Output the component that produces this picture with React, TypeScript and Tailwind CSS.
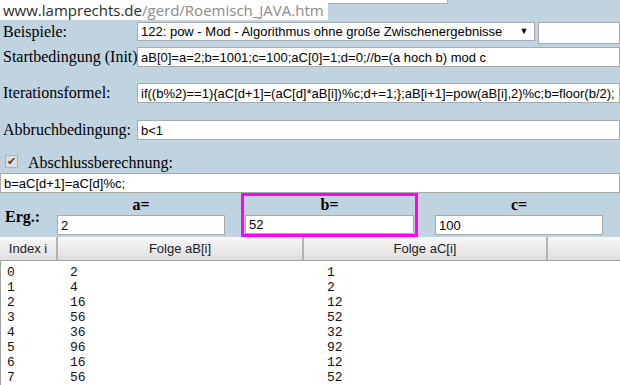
const rows: [string, string, string][] = [
  ['0', '2', '1'],
  ['1', '4', '2'],
  ['2', '16', '12'],
  ['3', '56', '52'],
  ['4', '36', '32'],
  ['5', '96', '92'],
  ['6', '16', '12'],
  ['7', '56', '52'],
];

const inputCls =
  "bg-white border border-[#a9a9a9] font-['Liberation_Sans',Arial,sans-serif] text-[13px] text-black leading-none flex items-center px-[3px] whitespace-nowrap overflow-hidden";

function Label({ children }: { children: React.ReactNode }) {
  return <div className="w-[137px] shrink-0 pl-[3px] text-[16px] text-black leading-none whitespace-nowrap">{children}</div>;
}

function ResultCol({ name, value }: { name: string; value: string }) {
  return (
    <div className="flex flex-col">
      <div className="h-[22px] flex items-end justify-center text-[16px] font-bold leading-none pb-[2px]">{name}</div>
      <div className={`${inputCls} h-[20px] w-[168px]`}>{value}</div>
    </div>
  );
}

export default function App() {
  return (
    <div className="w-[620px] h-[385px] overflow-hidden bg-[#bfd3e1] relative font-['Liberation_Serif','Times_New_Roman',serif]">
      {/* bottom edge of a box above the visible area */}
      <div className="h-[22px]">
        <div className="ml-[137px] w-[311px] h-[4px] bg-white border-x border-b border-[#a9a9a9]" />
      </div>

      {/* URL status overlay */}
      <div className="absolute top-0 left-0 h-[20px] bg-white pl-[3px] pr-[4px] flex items-center text-[15px] leading-none font-['Open_Sans','Noto_Sans',sans-serif]">
        <span className="text-[#2b2b2b]">www.lamprechts.de</span>
        <span className="text-[#8a8a8a]">/gerd/Roemisch_JAVA.htm</span>
      </div>

      {/* Beispiele */}
      <div className="flex items-center h-[19px]">
        <Label>Beispiele:</Label>
        <div className={`${inputCls} h-[19px] w-[401px] justify-between pr-[6px]`}>
          <span>122: pow - Mod - Algorithmus ohne große Zwischenergebnisse</span>
          <span className="text-[9px]">▼</span>
        </div>
        <div className={`${inputCls} h-[22px] w-[82px] ml-[3px] self-start`} />
      </div>

      {/* Startbedingung */}
      <div className="flex items-center h-[20px] mt-[6px]">
        <Label>Startbedingung (Init)</Label>
        <div className={`${inputCls} h-[20px] flex-1`}>aB[0]=a=2;b=1001;c=100;aC[0]=1;d=0;//b=(a hoch b) mod c</div>
      </div>

      {/* Iterationsformel */}
      <div className="flex items-center h-[20px] mt-[16px]">
        <Label>Iterationsformel:</Label>
        <div className={`${inputCls} h-[20px] flex-1`}>
          if((b%2)==1){'{'}aC[d+1]=(aC[d]*aB[i])%c;d+=1;{'}'};aB[i+1]=pow(aB[i],2)%c;b=floor(b/2);
        </div>
      </div>

      {/* Abbruchbedingung */}
      <div className="flex items-center h-[20px] mt-[17px]">
        <Label>Abbruchbedingung:</Label>
        <div className={`${inputCls} h-[20px] flex-1`}>b&lt;1</div>
      </div>

      {/* Abschlussberechnung */}
      <div className="flex items-end h-[33px] pb-[2px]">
        <div className="w-[13px] h-[13px] ml-[5px] mb-[3px] bg-[#dedede] border border-[#b0b0b0] flex items-center justify-center text-[#444] text-[11px] leading-none">✔</div>
        <div className="ml-[10px] text-[16px] leading-none">Abschlussberechnung:</div>
      </div>
      <div className={`${inputCls} h-[20px] w-full`}>b=aC[d+1]=aC[d]%c;</div>

      {/* Ergebnis */}
      <div className="flex items-stretch h-[44px]">
        <div className="w-[57px] pl-[5px] flex items-center pt-[3px] text-[16px] font-bold leading-none">Erg.:</div>
        <ResultCol name="a=" value="2" />
        <div className="ml-[16px] w-[177px] border-[3px] border-[#ff00ff] flex flex-col items-center">
          <div className="h-[19px] flex items-end justify-center text-[16px] font-bold leading-none pb-[2px]">b=</div>
          <div className={`${inputCls} h-[20px] w-[169px]`}>52</div>
        </div>
        <div className="ml-[17px]">
          <ResultCol name="c=" value="100" />
        </div>
      </div>

      {/* Tabellenkopf */}
      <div className="flex h-[24px] font-['Liberation_Sans',Arial,sans-serif] text-[13px] text-[#222] border-b border-[#a0a0a0] bg-gradient-to-b from-[#f8f8f8] to-[#dedede]">
        <div className="w-[58px] border-r-2 border-[#b4b4b4] flex items-center justify-center">Index i</div>
        <div className="w-[246px] border-r-2 border-[#b4b4b4] flex items-center justify-center">Folge aB[i]</div>
        <div className="w-[244px] border-r-2 border-[#b4b4b4] flex items-center justify-center">Folge aC[i]</div>
        <div className="flex-1" />
      </div>

      {/* Tabelleninhalt */}
      <div className="bg-white border-l border-[#a0a0a0] pt-[4px] h-[200px] font-['Liberation_Mono','Courier_New',monospace] text-[13px] leading-[15px] text-[#111]">
        {rows.map(([i, b, c]) => (
          <div key={i} className="flex">
            <div className="w-[69px] pl-[6px]">{i}</div>
            <div className="w-[257px]">{b}</div>
            <div>{c}</div>
          </div>
        ))}
      </div>
    </div>
  );
}
